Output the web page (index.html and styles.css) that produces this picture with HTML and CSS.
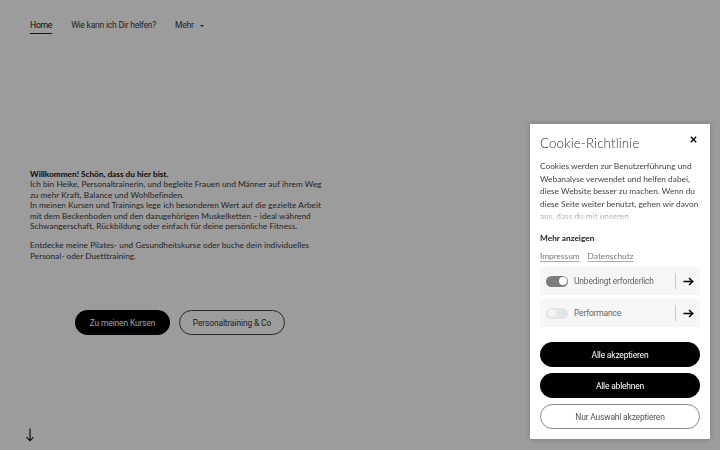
FILE: index.html
```html
<!DOCTYPE html>
<html lang="de">
<head>
<meta charset="utf-8">
<title>Heike</title>
<link rel="stylesheet" href="styles.css">
</head>
<body>
<div class="page">
  <nav class="nav">
    <a class="nav-link active">Home</a>
    <a class="nav-link">Wie kann ich Dir helfen?</a>
    <a class="nav-link more">Mehr <span class="caret"></span></a>
  </nav>
  <section class="hero">
    <div class="intro">
      <p class="lead"><strong>Willkommen! Schön, dass du hier bist.</strong><br>Ich bin Heike, Personaltrainerin, und begleite Frauen und Männer auf ihrem Weg zu mehr Kraft, Balance und Wohlbefinden.<br>In meinen Kursen und Trainings lege ich besonderen Wert auf die gezielte Arbeit mit dem Beckenboden und den dazugehörigen Muskelketten – ideal während Schwangerschaft, Rückbildung oder einfach für deine persönliche Fitness.</p>
      <p class="lead">Entdecke meine Pilates- und Gesundheitskurse oder buche dein individuelles Personal- oder Duetttraining.</p>
      <div class="cta">
        <a class="btn btn-dark">Zu meinen Kursen</a>
        <a class="btn btn-outline">Personaltraining &amp; Co</a>
      </div>
    </div>
    <div class="down">
      <svg width="10" height="14" viewBox="0 0 10 14"><path d="M5 0.5V12.5M1.5 9L5 12.8L8.5 9" fill="none" stroke="#000" stroke-width="1.1"/></svg>
    </div>
  </section>
</div>
<div class="overlay"></div>
<aside class="cookie">
  <div class="cookie-head">
    <h2 class="cookie-title">Cookie-Richtlinie</h2>
    <span class="close">
      <svg width="7" height="7" viewBox="0 0 7 7"><path d="M0.8 0.8L6.2 6.2M6.2 0.8L0.8 6.2" stroke="#000" stroke-width="1.3"/></svg>
    </span>
  </div>
  <div class="cookie-text">Cookies werden zur Benutzerführung und Webanalyse verwendet und helfen dabei, diese Website besser zu machen. Wenn du diese Seite weiter benutzt, gehen wir davon aus, dass du mit unseren</div>
  <div class="more-label">Mehr anzeigen</div>
  <div class="links"><a>Impressum</a><a>Datenschutz</a></div>
  <div class="option">
    <span class="toggle on"></span>
    <span class="opt-label">Unbedingt erforderlich</span>
    <span class="opt-arrow"><svg width="11" height="9" viewBox="0 0 11 9"><path d="M0.5 4.5H9.5M6 1L9.8 4.5L6 8" fill="none" stroke="#000" stroke-width="1.4"/></svg></span>
  </div>
  <div class="option">
    <span class="toggle"></span>
    <span class="opt-label">Performance</span>
    <span class="opt-arrow"><svg width="11" height="9" viewBox="0 0 11 9"><path d="M0.5 4.5H9.5M6 1L9.8 4.5L6 8" fill="none" stroke="#000" stroke-width="1.4"/></svg></span>
  </div>
  <div class="actions">
    <a class="pbtn pbtn-dark">Alle akzeptieren</a>
    <a class="pbtn pbtn-dark">Alle ablehnen</a>
    <a class="pbtn pbtn-outline">Nur Auswahl akzeptieren</a>
  </div>
</aside>
</body>
</html>
```
FILE: styles.css
```css
* { box-sizing: border-box; }
html, body { margin: 0; padding: 0; height: 100%; }
body {
  background: #fff;
  font-family: Lato, "Open Sans", sans-serif;
  color: #222;
  overflow: hidden;
}
.page { width: 720px; height: 450px; display: flex; flex-direction: column; }
.nav {
  display: flex;
  align-items: center;
  gap: 19px;
  padding: 20px 30px 0;
  font-family: Roboto, sans-serif;
  font-size: 8.6px;
  letter-spacing: -0.25px;
  color: #3a3a3a;
}
.nav-link { display: inline-flex; align-items: center; line-height: 11px; padding-bottom: 2px; border-bottom: 1px solid transparent; }
.nav-link.active { border-bottom-color: #222; color: #111; }
.caret { display: inline-block; width: 0; height: 0; margin-left: 6px; border-left: 2.2px solid transparent; border-right: 2.2px solid transparent; border-top: 2.4px solid #333; }
.hero { flex: 1; display: flex; flex-direction: column; padding: 0 30px; }
.intro { width: 294px; margin-top: 135px; }
.lead { margin: 0 0 9px; font-size: 8.25px; line-height: 10.4px; color: #3a3a3a; letter-spacing: 0.03px; }
.lead strong { color: #111; font-weight: 700; letter-spacing: 0; }
.cta { display: flex; justify-content: center; gap: 9px; margin-top: 49px; margin-right: -6px; }
.btn {
  display: inline-flex; align-items: center; justify-content: center;
  height: 25px; border-radius: 13px;
  font-family: Roboto, sans-serif; font-size: 8.4px; letter-spacing: -0.1px;
}
.btn-dark { background: #000; color: #fff; width: 95px; }
.btn-outline { border: 1px solid #444; color: #333; width: 106px; }
.down { margin-top: auto; margin-bottom: 8px; }
.down svg { display: block; margin-left: -5px; }
.overlay { position: fixed; inset: 0; background: rgba(0, 0, 0, 0.39); }
.cookie {
  position: fixed; top: 124px; right: 10px; width: 180px; height: 315px;
  background: #fff; padding: 10px 10px 0;
  box-shadow: 0 0 6px rgba(0, 0, 0, 0.25);
  display: flex; flex-direction: column;
}
.cookie-head { display: flex; justify-content: space-between; align-items: flex-start; }
.cookie-title { margin: 0; font-family: Lato, sans-serif; font-weight: 300; font-size: 13.3px; line-height: 16px; color: #333; padding-top: 1px; letter-spacing: 0.15px; }
.close { padding: 0 3px 0 0; margin-top: 2px; line-height: 0; }
.cookie-text {
  margin-top: 9px; height: 62px; overflow: hidden;
  font-size: 8.3px; line-height: 12.5px; color: #444;
  -webkit-mask-image: linear-gradient(to bottom, #000 74%, rgba(0,0,0,0.12) 100%);
  mask-image: linear-gradient(to bottom, #000 74%, rgba(0,0,0,0.12) 100%);
}
.more-label { margin-top: 11px; font-size: 8.3px; font-weight: 700; color: #222; line-height: 11px; }
.links { display: flex; gap: 8px; margin-top: 7px; font-size: 8.3px; line-height: 11px; }
.links a { color: #777; text-decoration: underline; text-underline-offset: 1.5px; text-decoration-color: #aaa; }
.option {
  display: flex; align-items: center; height: 28px; margin-top: 5px;
  background: #f6f6f6; padding: 0 6px;
}
.option + .option { margin-top: 4px; }
.toggle { position: relative; width: 22px; height: 11px; border-radius: 6px; background: #e4e4e4; flex: none; }
.toggle::after { content: ""; position: absolute; top: 1.5px; left: 1.5px; width: 8px; height: 8px; border-radius: 50%; background: #f3f3f3; }
.toggle.on { background: #7d7d7d; }
.toggle.on::after { left: auto; right: 1.5px; background: #fff; }
.opt-label { flex: 1; margin-left: 6px; font-family: Roboto, sans-serif; font-size: 8.5px; letter-spacing: -0.2px; color: #666; }
.opt-arrow { display: flex; align-items: center; height: 16px; border-left: 1px solid #ccc; padding-left: 7px; }
.opt-arrow svg { display: block; }
.actions { display: flex; flex-direction: column; gap: 6px; margin-top: 15px; }
.pbtn {
  display: flex; align-items: center; justify-content: center;
  height: 25px; border-radius: 13px;
  font-family: Roboto, sans-serif; font-size: 8.5px; letter-spacing: -0.2px;
}
.pbtn-dark { background: #000; color: #fff; }
.pbtn-outline { border: 1px solid #888; color: #555; }
```
